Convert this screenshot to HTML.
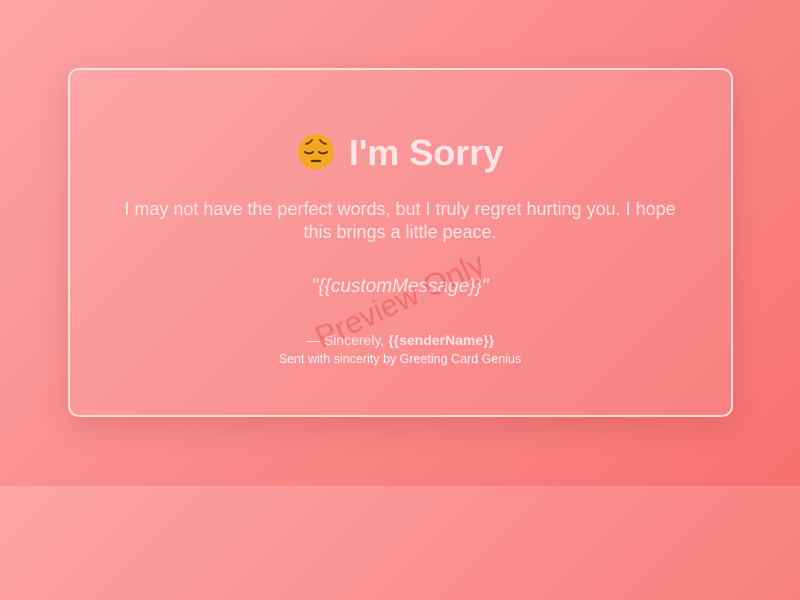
<!DOCTYPE html>
<html><head><meta charset="utf-8"><style>
html,body{margin:0;padding:0;width:800px;height:600px;overflow:hidden}
body{background:linear-gradient(135deg,#fca5a5,#f87171) 0 0/800px 486px repeat;font-family:"Liberation Sans",sans-serif;color:#ffe4e6;position:relative;text-align:center}
.card{position:absolute;left:68px;top:68px;width:661px;height:345px;border:2px solid rgba(255,228,230,0.9);border-radius:11px;background:rgba(255,255,255,0.08);box-shadow:0 10px 30px rgba(150,40,40,0.2)}
h1{position:absolute;left:0;right:0;top:131px;margin:0;font-size:36px;font-weight:bold;line-height:44px}
.emo{display:inline-block;vertical-align:-6px;margin-right:14px}
p.m{position:absolute;left:112px;right:112px;top:198px;margin:0;font-size:18px;line-height:23px}
.q{position:absolute;left:0;right:0;top:276px;font-size:19px;font-style:italic}
.s{position:absolute;left:0;right:0;top:332px;font-size:14px}
.f{position:absolute;left:0;right:0;top:352px;font-size:12.5px;color:#fff1f2}
.wm{position:absolute;left:400px;top:301px;transform:translate(-50%,-50%) rotate(-25deg);font-size:31px;color:rgba(220,38,38,0.3);white-space:nowrap}
</style></head><body>
<div class="card"></div>
<h1><svg class="emo" width="38" height="38" viewBox="0 0 38 38"><circle cx="19" cy="19" r="18" fill="#f5a623"/><path d="M9 11q4-1 6-4M29 11q-4-1-6-4" stroke="#6b3a12" stroke-width="1.8" fill="none" stroke-linecap="round"/><path d="M8 19q4 3 8 0M22 19q4 3 8 0" stroke="#5a3010" stroke-width="2" fill="none" stroke-linecap="round"/><path d="M15 28h8" stroke="#5a3010" stroke-width="2.2" stroke-linecap="round"/></svg>I'm Sorry</h1>
<p class="m">I may not have the perfect words, but I truly regret hurting you. I hope this brings a little peace.</p>
<div class="q">"{{customMessage}}"</div>
<div class="s">— Sincerely, <b>{{senderName}}</b></div>
<div class="f">Sent with sincerity by Greeting Card Genius</div>
<div class="wm">Preview Only</div>
</body></html>
